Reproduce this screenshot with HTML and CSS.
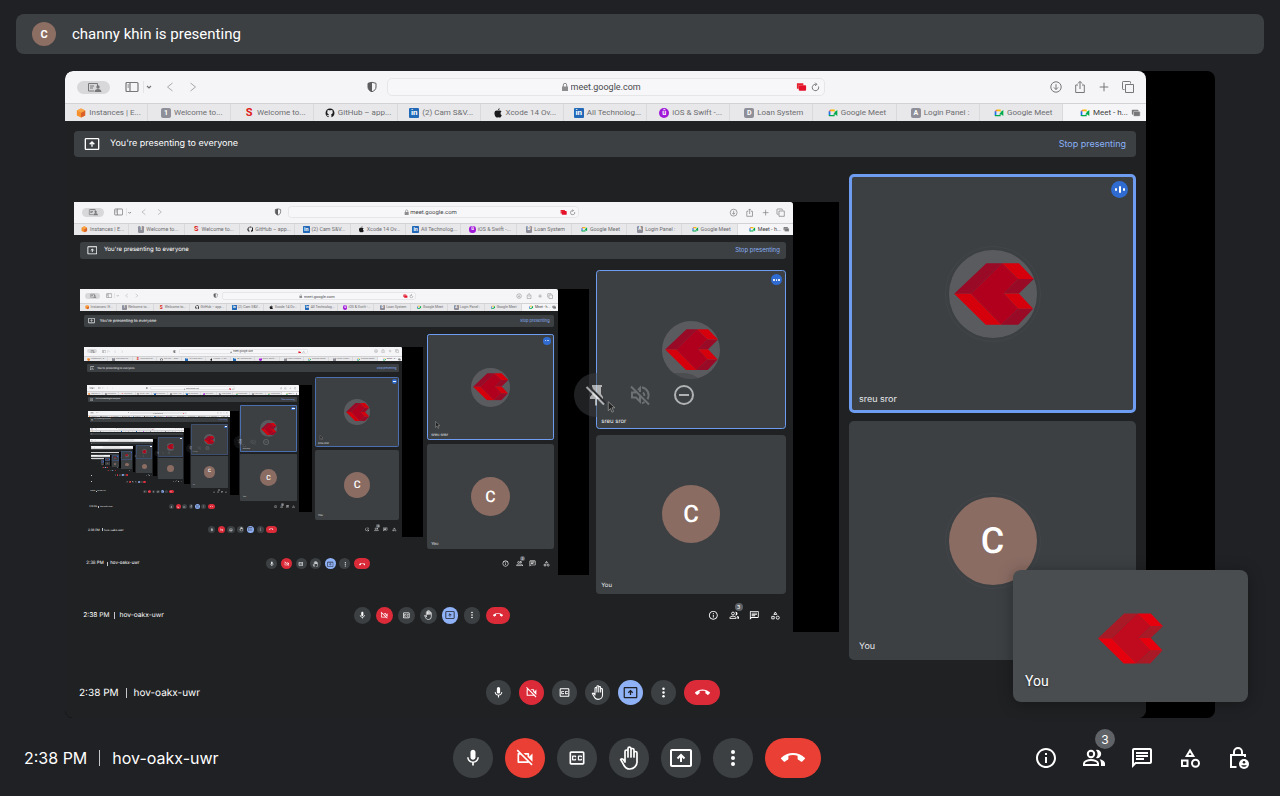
FILE: index.html
```html
<!DOCTYPE html>
<html lang="en">
<head>
<meta charset="utf-8">
<meta name="viewport" content="width=device-width, initial-scale=1">
<title>Meet - hov-oakx-uwr</title>
<link rel="stylesheet" href="styles.css">
</head>
<body>
<svg class="sprite" aria-hidden="true">
  <symbol id="mic" viewBox="0 0 24 24"><path d="M12 14c1.66 0 3-1.34 3-3V5c0-1.66-1.34-3-3-3S9 3.34 9 5v6c0 1.66 1.34 3 3 3zm5.3-3c0 3-2.54 5.1-5.3 5.1S6.700 14 6.700 11H5c0 3.41 2.720 6.230 6 6.720V21h2v-3.280c3.280-.48 6-3.300 6-6.720h-1.700z"/></symbol>
  <symbol id="cam-off" viewBox="0 0 24 24"><path d="M9.56 8l-2-2-4.15-4.14L2 3.27 4.73 6H4c-.55 0-1 .45-1 1v10c0 .55.45 1 1 1h12c.21 0 .39-.08.55-.18L19.73 21l1.41-1.41-8.86-8.86L9.56 8zM5 16V8h1.73l8 8H5zm10-8v2.61l6 6V6.5l-4 4V7c0-.55-.45-1-1-1h-5.610l2 2H15z"/></symbol>
  <symbol id="cc" viewBox="0 0 24 24"><path d="M19 4H5c-1.11 0-2 .9-2 2v12c0 1.1.89 2 2 2h14c1.100 0 2-.9 2-2V6c0-1.100-.9-2-2-2zm0 14H5V6h14v12zM7 15h3c.55 0 1-.45 1-1v-1H9.500v.5h-2v-3h2v.5H11v-1c0-.55-.45-1-1-1H7c-.55 0-1 .45-1 1v4c0 .55.45 1 1 1zm7 0h3c.55 0 1-.45 1-1v-1h-1.500v.5h-2v-3h2v.5H18v-1c0-.55-.45-1-1-1h-3c-.55 0-1 .45-1 1v4c0 .55.45 1 1 1z"/></symbol>
  <symbol id="hand" viewBox="0 0 24 24"><path fill="none" stroke="currentColor" stroke-width="1.700" stroke-linecap="round" stroke-linejoin="round" d="M8 15.500V5.500a1.500 1.500 0 0 1 3 0V11V2.600a1.500 1.500 0 0 1 3 0V11V4a1.500 1.500 0 0 1 3 0v7V7a1.500 1.500 0 0 1 3 0v9a7 7 0 0 1-7 7c-3.500 0-5.200-1.800-6.300-4.200L3.700 13.500c1.200-1 2.400-.5 3.200.8l1.100 1.700"/></symbol>
  <symbol id="present" viewBox="0 0 24 24"><path d="M21 3H3c-1.110 0-2 .89-2 2v14c0 1.110.89 2 2 2h18c1.110 0 2-.89 2-2V5c0-1.110-.89-2-2-2zm0 16H3V5h18v14z"/><path fill="none" stroke="currentColor" stroke-width="2" d="M12 16V9.500M8.500 12.500L12 9l3.500 3.500"/></symbol>
  <symbol id="more" viewBox="0 0 24 24"><circle cx="12" cy="6" r="2"/><circle cx="12" cy="12" r="2"/><circle cx="12" cy="18" r="2"/></symbol>
  <symbol id="hangup" viewBox="0 0 24 24"><path d="M12 9c-1.600 0-3.150.25-4.600.72v3.100c0 .39-.23.74-.56.9-.98.49-1.870 1.120-2.660 1.850-.18.18-.43.28-.7.28-.28 0-.53-.11-.71-.29L.29 13.080c-.18-.17-.29-.42-.29-.7 0-.28.11-.53.29-.71C3.340 8.780 7.460 7 12 7s8.660 1.780 11.710 4.670c.18.18.29.43.29.71 0 .28-.11.53-.29.71l-2.480 2.480c-.18.18-.43.29-.71.29-.27 0-.52-.11-.7-.28-.79-.74-1.690-1.360-2.670-1.850-.33-.16-.56-.5-.56-.9v-3.100C15.150 9.250 13.600 9 12 9z"/></symbol>
  <symbol id="info" viewBox="0 0 24 24"><path d="M11 7h2v2h-2zm0 4h2v6h-2zm1-9C6.480 2 2 6.480 2 12s4.480 10 10 10 10-4.480 10-10S17.520 2 12 2zm0 18c-4.410 0-8-3.590-8-8s3.590-8 8-8 8 3.590 8 8-3.590 8-8 8z"/></symbol>
  <symbol id="people" viewBox="0 0 24 24"><g fill="none" stroke="currentColor" stroke-width="2"><circle cx="9" cy="8" r="3.200"/><path d="M2 19v-1.500c0-2.200 4.200-3.500 7-3.500s7 1.300 7 3.500V19z"/></g><path d="M14 3.900c.4-.1.700-.1 1-.1a4.200 4.200 0 0 1 0 8.400c-.3 0-.6 0-1-.1a6.500 6.500 0 0 0 0-8.200zM17.500 13.200c2.800.6 5.500 2 5.500 4.300V20h-4v-2.500c0-1.900-.6-3.200-1.500-4.300z"/></symbol>
  <symbol id="chat" viewBox="0 0 24 24"><path d="M4 4h16v12H5.170L4 17.170V4m0-2c-1.100 0-2 .9-2 2v18l4-4h14c1.100 0 2-.9 2-2V4c0-1.100-.9-2-2-2H4zm2 10h8v2H6v-2zm0-3h12v2H6V9zm0-3h12v2H6V6z"/></symbol>
  <symbol id="shapes" viewBox="0 0 24 24"><g fill="none" stroke="currentColor" stroke-width="2"><path d="M12 4.500L8.700 10h6.600zM4 14.500h5.500V20H4z"/><circle cx="17.500" cy="17.300" r="3.500"/></g></symbol>
  <symbol id="lock" viewBox="0 0 24 24"><path fill="none" stroke="currentColor" stroke-width="2" d="M10.500 21H5V9h14v2M8 9V6a4 4 0 0 1 8 0v3"/><circle cx="18" cy="18" r="5"/><g fill="#202124"><circle cx="18" cy="16.300" r="1.300"/><path d="M15.200 19.300h5.600c-1 2-4.600 2-5.600 0z"/></g></symbol>
  <symbol id="unpin" viewBox="0 0 24 24"><path d="M8 2h10v2h-1v7l2 3v2h-6v6l-1 1-1-1v-6H6v-2l2.500-3V4H8z"/><path stroke="#2c2e31" stroke-width="2" d="M4.500 3L22 20.500"/><path stroke="currentColor" stroke-width="2" d="M2.500 4L20 21.500"/></symbol>
  <symbol id="muted" viewBox="0 0 24 24"><path fill="none" stroke="currentColor" stroke-width="2" d="M3 3.500L21 21.500M8 9.500H4v5h4l4 4V13M10 7l2-2v4M15 9.500c1 .8 1.500 2 1.300 3.500M14 4.300c6 1.500 8 7 5.500 12M16.500 19c-.8.600-1.600 1-2.500 1.200"/></symbol>
  <symbol id="remove" viewBox="0 0 24 24"><circle cx="12" cy="12" r="9" fill="none" stroke="currentColor" stroke-width="2"/><path d="M7 11h10v2H7z"/></symbol>
  <symbol id="brand" viewBox="340 616 240 187">
    <path fill="var(--face)" d="M485 617L390 709l92 93 51-48-43-46 43-44z"/>
    <path fill="var(--shade)" d="M340 709l97-92h48l-95 92zM533 664h47l-45 44h-45zM533 754h45l-45 48h-51z"/>
    <path fill="var(--lit)" d="M340 709h50l92 93h-47zM485 617h50l45 47h-47zM490 708h45l43 46h-45z"/>
  </symbol>
  <symbol id="cursor" viewBox="0 0 12 16"><path fill="#222" stroke="#999" d="M1 1v12l3-3 2 5 2-1-2-5h4z"/></symbol>

  <symbol id="windows" viewBox="0 0 18 12"><path fill="none" stroke="currentColor" d="M9 10H3.500V2.500h9V5"/><path d="M5 4.500h4v1H5zM5 6.500h3v1H5zM5 2h7v1H5z"/><circle cx="13" cy="6" r="1.700"/><path d="M9.500 11c0-4 7-4 7 0z"/></symbol>
  <symbol id="sidebar" viewBox="0 0 14 12"><path fill="none" stroke="currentColor" stroke-width="1.200" d="M2 1.500h10q1 0 1 1v7q0 1-1 1H2q-1 0-1-1v-7q0-1 1-1zM5 1.500v9"/><path fill="none" stroke="currentColor" d="M2.500 4h1.500M2.500 6h1.500"/></symbol>
  <symbol id="down" viewBox="0 0 8 8"><path fill="none" stroke="currentColor" stroke-width="1.200" d="M2 3l2 2 2-2"/></symbol>
  <symbol id="back" viewBox="0 0 8 12"><path fill="none" stroke="currentColor" d="M6.500 2l-5 4 5 4"/></symbol>
  <symbol id="forward" viewBox="0 0 8 12"><path fill="none" stroke="currentColor" d="M1.500 2l5 4-5 4"/></symbol>
  <symbol id="shield" viewBox="0 0 12 12"><path fill="none" stroke="currentColor" d="M6 1.300l4 1V6c0 2.300-1.500 3.800-4 4.700C3.500 9.800 2 8.300 2 6V2.300z"/><path d="M6 1L2 2.300V6c0 2.500 1.500 4 4 5z"/></symbol>
  <symbol id="padlock" viewBox="0 0 8 10"><path d="M1 4.500h6V9H1z"/><path fill="none" stroke="currentColor" d="M2.300 5V3a1.700 1.700 0 0 1 3.400 0v2"/></symbol>
  <symbol id="sharing" viewBox="0 0 12 10"><path fill="#e5222e" d="M1 1h7v2H3v4H1z"/><rect x="3" y="3" width="8" height="6" rx="1" fill="#e5112a"/></symbol>
  <symbol id="reload" viewBox="0 0 10 10"><path fill="none" stroke="currentColor" d="M8 4.500A3.200 3.200 0 1 1 5 2.300h1M4.700.7L6.300 2.300 4.700 4"/></symbol>
  <symbol id="download" viewBox="0 0 14 14"><path fill="none" stroke="currentColor" d="M7 1.800a5.200 5.200 0 1 1 0 10.400a5.200 5.200 0 1 1 0-10.400M7 4.200v5.300M4.900 7.400L7 9.500l2.100-2.100"/></symbol>
  <symbol id="export" viewBox="0 0 14 14"><path fill="none" stroke="currentColor" d="M5 5H2.700v7.500h8.600V5H9M7 9V1.500M4.900 3.500L7 1.400l2.100 2.100"/></symbol>
  <symbol id="plus" viewBox="0 0 14 14"><path fill="none" stroke="currentColor" d="M7 2.700v8.600M2.700 7h8.600"/></symbol>
  <symbol id="stack" viewBox="0 0 14 14"><path fill="none" stroke="currentColor" d="M3.500 9.500H2.200q-.7 0-.7-.7V2.200q0-.7.7-.7h6.600q.7 0 .7.7v1.300M4.500 4.500h8v8h-8z"/></symbol>
  <symbol id="tabgroup" viewBox="0 0 12 10"><rect x="1" y="1" width="8" height="6" rx="1" fill="#77777a"/><rect x="3" y="3" width="8" height="6" rx="1" fill="#77777a" stroke="#f5f5f7" stroke-width=".6"/></symbol>

  <symbol id="fav-aws" viewBox="0 0 12 12"><path fill="#f6902c" d="M6 .5L11 3v6L6 11.500 1 9V3z"/><path fill="#d9602a" d="M6 6l5-3v6l-5 2.500z"/><path fill="#f9a64a" d="M6 .5L11 3 6 5.500 1 3z"/></symbol>
  <symbol id="fav-github" viewBox="0 0 12 12"><path fill="#1b1b1d" d="M6 .7a5.400 5.400 0 0 0-1.700 10.500V9.500C2.500 9.800 2.300 8.500 2 8c.9 0 1 1 2.300.7 0-.4.2-.7.4-.9C2.500 7.400 2.200 4.800 3.200 3.700c-.2-.6-.1-1.200.1-1.500.6 0 1 .3 1.400.6.800-.2 1.800-.2 2.600 0 .4-.3.800-.6 1.400-.6.200.3.300.9.100 1.500 1 1.100.7 3.700-1.500 4.100.3.300.4.600.4 1v2.400A5.400 5.400 0 0 0 6 .7z"/></symbol>
  <symbol id="fav-apple" viewBox="0 0 12 12"><path fill="#1b1b1d" d="M8 .3C6.700.5 6 1.500 6.100 2.600 7.300 2.500 8 1.500 8 .3zM10.200 4.200C9.600 3.200 8.200 2.700 6.300 3.400 4.300 2.700 1.800 3.200 1.700 6.200c0 2.500 1.700 5.300 3 5.300.7 0 .9-.4 1.700-.4s1 .4 1.700.4c1.100 0 2-1.700 2.400-2.900-1.900-.8-1.900-3.400-.3-4.400z"/></symbol>
  <symbol id="fav-meet" viewBox="0 0 12 12"><path fill="#1a73e8" d="M.8 4h2v4.500h-2z"/><path fill="#ea4335" d="M.8 4L3.300 1.800V4z"/><path fill="#fbbc04" d="M3.300 1.800H8V4.500L6.500 4H3.300z"/><path fill="#00a94b" d="M.8 8.300h6V7L8 5.500V10H1.800q-1 0-1-1zM8 4.800L11.200 2.300v7.400L8 7.200z"/></symbol>
</svg>

<header class="notice">
  <span class="notice-avatar">C</span>
  <span>channy khin is presenting</span>
</header>

<main class="stage" id="stage">
  <div class="pip">
    <svg class="pip-logo"><use href="#brand"/></svg>
    <span class="pip-name">You</span>
  </div>
</main>

<footer class="callbar">
  <div class="meeting"><span>2:38 PM</span><i></i><span>hov-oakx-uwr</span></div>
  <div class="controls">
    <button aria-label="Microphone"><svg><use href="#mic"/></svg></button>
    <button class="red" aria-label="Turn on camera"><svg><use href="#cam-off"/></svg></button>
    <button aria-label="Captions"><svg><use href="#cc"/></svg></button>
    <button aria-label="Raise hand"><svg><use href="#hand"/></svg></button>
    <button aria-label="Present now"><svg><use href="#present"/></svg></button>
    <button aria-label="More options"><svg><use href="#more"/></svg></button>
    <button class="red hangup" aria-label="Leave call"><svg><use href="#hangup"/></svg></button>
  </div>
  <div class="panels">
    <button aria-label="Meeting details"><svg><use href="#info"/></svg></button>
    <button aria-label="People"><svg><use href="#people"/></svg><span class="count">3</span></button>
    <button aria-label="Chat"><svg><use href="#chat"/></svg></button>
    <button aria-label="Activities"><svg><use href="#shapes"/></svg></button>
    <button aria-label="Host controls"><svg><use href="#lock"/></svg></button>
  </div>
</footer>

<template id="share">
  <section class="share">
    <div class="window">
      <div class="toolbar">
        <div class="tools">
          <button class="chip" aria-label="Tab groups"><svg><use href="#windows"/></svg></button>
          <button class="side" aria-label="Sidebar"><svg><use href="#sidebar"/></svg></button>
          <button class="drop" aria-label="Sidebar menu"><svg><use href="#down"/></svg></button>
          <button class="nav" aria-label="Back"><svg><use href="#back"/></svg></button>
          <button class="nav" aria-label="Forward"><svg><use href="#forward"/></svg></button>
          <svg class="shield"><use href="#shield"/></svg>
        </div>
        <div class="address">
          <svg class="padlock"><use href="#padlock"/></svg>
          <input type="text" value="meet.google.com" aria-label="Address">
          <div class="address-end"><svg><use href="#sharing"/></svg><svg><use href="#reload"/></svg></div>
        </div>
        <div class="actions">
          <button aria-label="Downloads"><svg><use href="#download"/></svg></button>
          <button aria-label="Share"><svg><use href="#export"/></svg></button>
          <button aria-label="New tab"><svg><use href="#plus"/></svg></button>
          <button aria-label="All tabs"><svg><use href="#stack"/></svg></button>
        </div>
      </div>
      <nav class="tabs"></nav>
      <div class="page">
        <div class="banner">
          <svg><use href="#present"/></svg>
          <span>You're presenting to everyone</span>
          <button>Stop presenting</button>
        </div>
        <div class="content">
          <div class="mirror"></div>
          <div class="tiles">
            <div class="tile speaking">
              <span class="audio"><i></i><i></i><i></i></span>
              <span class="avatar"><svg><use href="#brand"/></svg></span>
              <span class="name">sreu sror</span>
            </div>
            <div class="tile">
              <span class="avatar letter">C</span>
              <span class="name">You</span>
            </div>
          </div>
        </div>
        <div class="bottom">
          <div class="meeting"><span>2:38 PM</span><i></i><span>hov-oakx-uwr</span></div>
          <div class="controls">
            <button aria-label="Microphone"><svg><use href="#mic"/></svg></button>
            <button class="red" aria-label="Turn on camera"><svg><use href="#cam-off"/></svg></button>
            <button aria-label="Captions"><svg><use href="#cc"/></svg></button>
            <button aria-label="Raise hand"><svg><use href="#hand"/></svg></button>
            <button class="blue" aria-label="Present now"><svg><use href="#present"/></svg></button>
            <button aria-label="More options"><svg><use href="#more"/></svg></button>
            <button class="red hangup" aria-label="Leave call"><svg><use href="#hangup"/></svg></button>
          </div>
          <div class="panels">
            <button aria-label="Meeting details"><svg><use href="#info"/></svg></button>
            <button aria-label="People"><svg><use href="#people"/></svg><span class="count">3</span></button>
            <button aria-label="Chat"><svg><use href="#chat"/></svg></button>
            <button aria-label="Activities"><svg><use href="#shapes"/></svg></button>
          </div>
        </div>
      </div>
    </div>
    <div class="hover">
      <button aria-label="Unpin"><svg><use href="#unpin"/></svg></button>
      <button class="faint" aria-label="Mute"><svg><use href="#muted"/></svg></button>
      <button aria-label="Remove"><svg><use href="#remove"/></svg></button>
    </div>
    <svg class="cursor"><use href="#cursor"/></svg>
  </section>
</template>
<script src="script.js"></script>
</body>
</html>
```
FILE: script.js
```js
const tabs = [
  ['#fav-aws', 'Instances | E...'],
  ['1', 'Welcome to...'],
  ['S', 'Welcome to...', 'scala'],
  ['#fav-github', 'GitHub – app...'],
  ['in', '(2) Cam S&V...', 'linkedin'],
  ['#fav-apple', 'Xcode 14 Ov...'],
  ['in', 'All Technolog...', 'linkedin'],
  ['û', 'iOS & Swift -...', 'udemy'],
  ['D', 'Loan System'],
  ['#fav-meet', 'Google Meet'],
  ['A', 'Login Panel :'],
  ['#fav-meet', 'Google Meet'],
  ['#fav-meet', 'Meet - h...']
];

const icon = id => `<svg class="fav"><use href="${id}"/></svg>`;

function tabMarkup([mark, label, kind = ''], i) {
  const fav = mark[0] === '#' ? icon(mark) : `<span class="fav badge ${kind}">${mark}</span>`;
  const last = i === tabs.length - 1;
  return `<button class="tab${last ? ' current' : ''}">${fav}<span>${label.replace('&', '&amp;')}</span>${last ? icon('#tabgroup') : ''}</button>`;
}

const DEPTH = 11;
const LAST_WITH_TEXT = 5;

function stripText(el) {
  const walker = document.createTreeWalker(el, NodeFilter.SHOW_TEXT);
  while (walker.nextNode()) walker.currentNode.data = '';
  el.querySelector('input').value = '';
}

// Each shared screen shows the call that is sharing it.
function share(level) {
  const el = document.getElementById('share').content.firstElementChild.cloneNode(true);
  el.querySelector('.tabs').innerHTML = tabs.map(tabMarkup).join('');
  if (level > 0) el.classList.add('nested');
  if (level === 1 || level === 2) el.querySelector('.hover').remove();
  if (level > LAST_WITH_TEXT) stripText(el);
  if (level < DEPTH) el.querySelector('.mirror').append(share(level + 1));
  return el;
}

document.getElementById('stage').prepend(share(0));
```
FILE: styles.css
```css
* { box-sizing: border-box; }

body {
  margin: 0;
  height: 100vh;
  display: flex;
  flex-direction: column;
  overflow: hidden;
  background: #202124;
  color: #fff;
  font-family: Roboto, "Open Sans", sans-serif;
  --face: #b0001e;
  --shade: #980a26;
  --lit: #d6000c;
}

button {
  padding: 0;
  border: 0;
  background: none;
  color: inherit;
  font: inherit;
}

svg { display: block; fill: currentColor; flex: none; }
.sprite { position: absolute; width: 0; height: 0; }

.notice {
  flex: none;
  display: flex;
  align-items: center;
  gap: 16px;
  height: 40px;
  margin: 14px 16px 17px;
  padding: 0 16px;
  border-radius: 8px;
  background: #3c4043;
  font-size: 15px;
}

.notice-avatar {
  display: grid;
  place-items: center;
  width: 24px;
  height: 24px;
  border-radius: 50%;
  background: #8d6e63;
  font-size: 11px;
  font-weight: 700;
}

.stage {
  flex: 1;
  min-height: 0;
  display: flex;
  justify-content: center;
}

.pip {
  position: absolute;
  right: 32px;
  bottom: 94px;
  display: grid;
  place-items: center;
  width: 235px;
  height: 132px;
  padding-top: 4px;
  border-radius: 8px;
  background: #4a4d50;
  box-shadow: 0 2px 16px rgba(0, 0, 0, .3);
  --face: #c00a1e;
  --shade: #a81a26;
  --lit: #e6000e;
}

.pip-logo { width: 65px; height: 51px; }

.pip-name {
  position: absolute;
  left: 12px;
  bottom: 12px;
  font-size: 14px;
  line-height: 18px;
  text-shadow: 0 1px 2px rgba(0, 0, 0, .6);
}

.callbar {
  flex: none;
  display: grid;
  grid-template-columns: 1fr auto 1fr;
  align-items: center;
  height: 78px;
  padding: 2px 30px 0 24px;
  font: 16px Inter, sans-serif;
}

.meeting { display: flex; align-items: center; gap: 12px; }
.meeting i { width: 1px; height: 16px; background: #c4c6c9; }

.controls { display: flex; gap: 12px; }

.controls button {
  display: grid;
  place-items: center;
  width: 40px;
  height: 40px;
  border-radius: 20px;
  background: #3c4043;
}

.controls svg { width: 24px; height: 24px; }
.controls button:nth-child(-n+3) svg { width: 20px; height: 20px; }
.controls .red { background: #ea3f35; }
.controls .hangup { width: 56px; }

.panels { display: flex; justify-content: flex-end; gap: 24px; }
.panels button { position: relative; }
.panels svg { width: 24px; height: 24px; }

.count {
  position: absolute;
  left: 13px;
  top: -17px;
  display: grid;
  place-items: center;
  width: 20px;
  height: 20px;
  border-radius: 50%;
  background: #5f6368;
  font-size: 12px;
}

/* Shared screen */

.share {
  position: relative;
  height: 100%;
  aspect-ratio: 1150 / 647;
  border-radius: 8px;
  overflow: hidden;
  background: #000;
  text-rendering: geometricPrecision;
}

.share.nested {
  zoom: .665;
  width: 100%;
  height: auto;
  border-radius: 0;
}

.window {
  display: flex;
  flex-direction: column;
  width: 94%;
  height: 100%;
  border-radius: 8px;
  overflow: hidden;
  background: #202124;
}

.nested > .window { border-radius: 0 4px 0 0; }

.toolbar {
  flex: none;
  display: grid;
  grid-template-columns: 1fr 438px 1fr;
  align-items: center;
  height: 32px;
  background: #f5f5f7;
  color: #77777a;
}

.tools { display: flex; align-items: center; padding: 0 9px 0 12px; }

.chip {
  display: grid;
  place-items: center;
  width: 33px;
  height: 13px;
  margin-right: 15px;
  border-radius: 7px;
  background: #d8d8da;
}

.chip svg { width: 18px; height: 12px; }
.side { padding-right: 4px; border-right: 1px solid #e4e4e6; }
.side svg { width: 14px; height: 12px; }
.drop { margin: 0 13px 0 1px; }
.drop svg { width: 8px; height: 8px; }
.nav { margin-right: 15px; color: #a8a8ab; }
.nav svg { width: 8px; height: 12px; }
.shield { width: 12px; height: 12px; margin-left: auto; color: #5c5c5f; }

.address {
  display: grid;
  grid-template-columns: 1fr 70px 1fr;
  align-items: center;
  column-gap: 2px;
  height: 18px;
  padding: 0 3px;
  border: 1px solid #e6e6e8;
  border-radius: 5px;
  background: #f7f7f9;
}

.padlock { justify-self: end; width: 8px; height: 10px; color: #8d8d90; }

.address input {
  width: 100%;
  padding: 0;
  border: 0;
  background: none;
  color: #4a4a4d;
  font: 9px/16px Roboto, sans-serif;
  text-align: center;
}

.address-end { display: flex; justify-content: flex-end; gap: 3px; }
.address-end svg { width: 11px; height: 10px; }

.actions { display: flex; justify-content: flex-end; gap: 10px; padding-right: 11px; }
.actions svg { width: 14px; height: 14px; }

.tabs {
  flex: none;
  display: grid;
  grid-template-columns: repeat(13, minmax(0, 1fr));
  height: 18px;
  border-top: 1px solid #d2d2d4;
  background: #e8e8ea;
}

.tab {
  display: flex;
  align-items: center;
  justify-content: center;
  gap: 3px;
  padding-left: 5px;
  border-right: 1px solid #d9d9db;
  color: #6c6c6f;
  font: 8px/16px Roboto, sans-serif;
  white-space: nowrap;
}

.tab.current { padding-left: 12px; border: 0; background: #f5f5f7; color: #3e3e41; }
.fav { flex: none; width: 10px; height: 10px; }

.badge {
  display: grid;
  place-items: center;
  border-radius: 2px;
  background: #8f8f99;
  color: #fff;
  font: bold 7px/10px Roboto, sans-serif;
}

.badge.scala { background: none; color: #e01818; font-size: 11px; }
.badge.linkedin { background: #2269b8; border-radius: 1px; font-size: 8px; }
.badge.udemy { background: #a018d8; border-radius: 50%; }

.page {
  flex: 1;
  min-height: 0;
  display: flex;
  flex-direction: column;
  padding-top: 10px;
  background: #202123;
}

.banner {
  flex: none;
  display: flex;
  align-items: center;
  gap: 10px;
  height: 26px;
  margin: 0 10px 17px 9px;
  padding: 0 10px;
  border-radius: 4px;
  background: #3c4043;
  font: 9px/16px Inter, sans-serif;
}

.banner svg { width: 16px; height: 16px; }
.banner button { margin-left: auto; color: #8ab0f6; }

.content {
  flex: 1;
  min-height: 0;
  display: grid;
  grid-template-columns: minmax(0, 1fr) 287px;
  column-gap: 10px;
  padding: 0 10px 0 9px;
}

.mirror { display: flex; align-items: center; }

.tiles { display: grid; grid-template-rows: 1fr 1fr; gap: 8px; }

.tile {
  position: relative;
  display: grid;
  place-items: center;
  border: 3px solid #3c4043;
  border-radius: 5px;
  background: #3c4043;
}

.tile.speaking { border-color: #6d9cf0; }
.nested .nested .nested .tile.speaking { border-color: #4c6faf; }
.nested .nested .nested .nested .nested .tile.speaking { border-color: #3f4f6e; }

.avatar {
  display: grid;
  place-items: center;
  width: 88px;
  height: 88px;
  border-radius: 50%;
  background: #5a5b5f;
  outline: 1px solid #424549;
  outline-offset: 3px;
}

.avatar svg { width: 80px; height: 62px; margin-left: 2px; }

.avatar.letter {
  background: #8a6c63;
  font-size: 36px;
  font-weight: 500;
}

.nested .avatar { outline: 0; }

.name {
  position: absolute;
  left: 7px;
  bottom: 4px;
  font: 9px/12px Inter, sans-serif;
  color: #e8eaed;
}

.audio {
  position: absolute;
  top: 4px;
  right: 5px;
  display: flex;
  align-items: center;
  justify-content: center;
  gap: 2px;
  width: 17px;
  height: 17px;
  border-radius: 50%;
  background: #2f6bd0;
}

.audio i { width: 2px; height: 3px; border-radius: 1px; background: #fff; }
.audio i:nth-child(2) { height: 7px; }
.nested .audio i:nth-child(2) { height: 3px; }

.bottom {
  flex: none;
  display: grid;
  grid-template-columns: 1fr auto 1fr;
  align-items: center;
  height: 58px;
  padding: 7px 19px 0 14px;
  font: 10px Inter, sans-serif;
}

.bottom .meeting { gap: 7px; }
.bottom .meeting i { height: 10px; }
.bottom .controls { gap: 8px; }
.bottom .controls button { width: 25px; height: 25px; border-radius: 13px; }
.bottom .controls .hangup { width: 36px; }
.bottom .controls svg { width: 15px; height: 15px; }
.bottom .controls button:nth-child(-n+3) svg { width: 13px; height: 13px; }
.bottom .controls .red { background: #db2b39; }
.bottom .controls .blue { background: #8fb1f5; color: #202124; }
.bottom .panels { gap: 15px; }
.bottom .panels svg { width: 16px; height: 16px; }
.bottom .count { left: 9px; top: -10px; width: 12px; height: 12px; font-size: 8px; }

.hover {
  position: absolute;
  left: 50%;
  top: 50%;
  translate: -50% -50%;
  display: flex;
  align-items: center;
  justify-content: center;
  gap: 20px;
  width: 132px;
  height: 44px;
  border-radius: 22px;
  background: rgba(60, 64, 67, .5);
  color: rgba(255, 255, 255, .6);
}

.hover svg { width: 24px; height: 24px; }
.hover .faint { color: rgba(255, 255, 255, .25); }
.nested .hover { opacity: .5; }

.cursor {
  position: absolute;
  left: 47%;
  top: 51%;
  width: 12px;
  height: 12px;
}
```
